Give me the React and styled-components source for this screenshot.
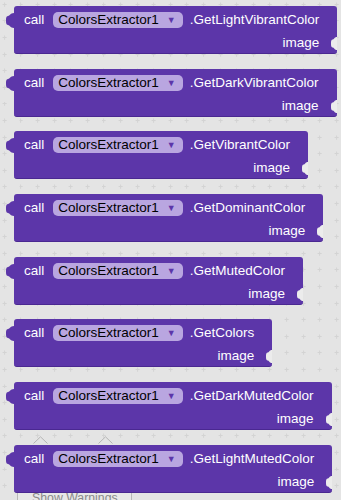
import React from 'react';
import styled, { createGlobalStyle } from 'styled-components';

const GlobalStyle = createGlobalStyle`
  html, body {
    margin: 0;
    padding: 0;
  }
  body {
    width: 341px;
    height: 500px;
    overflow: hidden;
    background: #e4e4e4;
    font-family: "Liberation Sans", Arial, sans-serif;
  }
`;

const grid = encodeURIComponent(
  '<svg xmlns="http://www.w3.org/2000/svg" width="16.6" height="16.6"><path d="M4.5 2.5v4M2.5 4.5h4" stroke="#d3d3d3" stroke-width="1"/></svg>'
);

const Workspace = styled.div`
  position: relative;
  box-sizing: border-box;
  width: 341px;
  height: 500px;
  overflow: hidden;
  display: flex;
  flex-direction: column;
  align-items: flex-start;
  gap: 14.7px;
  padding: 6px 0 0 14px;
  background-color: #e4e4e4;
  background-image: url("data:image/svg+xml,${grid}");
`;

const Block = styled.div`
  position: relative;
  z-index: 1;
  display: inline-flex;
  flex-direction: column;
  gap: 7px;
  padding: 6px 18px 2px 10px;
  background: #5c36a9;
  border-radius: 3px;
  border-bottom: 1px solid #4a2891;
  color: #fff;
  font-size: 13.5px;
  line-height: 16px;
`;

const Row = styled.div`
  display: flex;
  align-items: center;
  height: 16px;
  justify-content: ${(p) => (p.$end ? 'flex-end' : 'flex-start')};
  white-space: nowrap;
`;

const Call = styled.span`
  margin-right: 9px;
`;

const Pill = styled.span`
  display: flex;
  align-items: center;
  height: 16px;
  padding: 0 7px 0 5px;
  border-radius: 5px;
  background: #b9a6e0;
  color: #000;
`;

const Arrow = styled.span`
  margin-left: 8px;
  font-size: 9px;
  color: #5c36a9;
`;

const Method = styled.span`
  margin-left: 7px;
`;

const Tab = styled.svg`
  position: absolute;
  left: -8px;
  top: 7px;
`;

const Socket = styled.svg`
  position: absolute;
  right: 0;
  top: 31px;
`;

const Warnings = styled.div`
  position: absolute;
  z-index: 0;
  left: 17px;
  top: 436px;
  display: flex;
  flex-direction: column;
  gap: 44px;
`;

const Chevrons = styled.div`
  display: flex;
  gap: 50px;
  padding-left: 16px;
`;

const WarnButton = styled.div`
  box-sizing: border-box;
  width: 115px;
  height: 24px;
  border: 1px solid #b8b8b8;
  background: #e8e8e8;
  color: #8a8a8a;
  font-size: 12.3px;
  line-height: 18px;
  padding-left: 14px;
`;

const methods = [
  'GetLightVibrantColor',
  'GetDarkVibrantColor',
  'GetVibrantColor',
  'GetDominantColor',
  'GetMutedColor',
  'GetColors',
  'GetDarkMutedColor',
  'GetLightMutedColor',
];

function Chevron() {
  return (
    <svg width="15" height="8" viewBox="0 0 15 8">
      <path d="M0.5 7.5L7.5 0.8L14.5 7.5" fill="none" stroke="#b5b5b5" strokeWidth="1" />
    </svg>
  );
}

function CallBlock({ method }) {
  return (
    <Block>
      <Tab width="8" height="15" viewBox="0 0 8 15">
        <path d="M8 0C4 0 4 3 2 3C0 3 0 6 0 7.5C0 9 0 12 2 12C4 12 4 15 8 15Z" fill="#5c36a9" />
      </Tab>
      <Row>
        <Call>call</Call>
        <Pill>
          ColorsExtractor1
          <Arrow>▼</Arrow>
        </Pill>
        <Method>.{method}</Method>
      </Row>
      <Row $end>image</Row>
      <Socket width="6" height="13" viewBox="0 0 6 13">
        <path d="M6 0C3 0 3.5 2.5 1.5 2.5C0 2.5 0 5 0 6.5C0 8 0 10.5 1.5 10.5C3.5 10.5 3 13 6 13Z" fill="#ececec" />
      </Socket>
    </Block>
  );
}

export default function App() {
  return (
    <>
      <GlobalStyle />
      <Workspace>
        {methods.map((m) => (
          <CallBlock key={m} method={m} />
        ))}
        <Warnings>
          <Chevrons>
            <Chevron />
            <Chevron />
          </Chevrons>
          <WarnButton>Show Warnings</WarnButton>
        </Warnings>
      </Workspace>
    </>
  );
}
